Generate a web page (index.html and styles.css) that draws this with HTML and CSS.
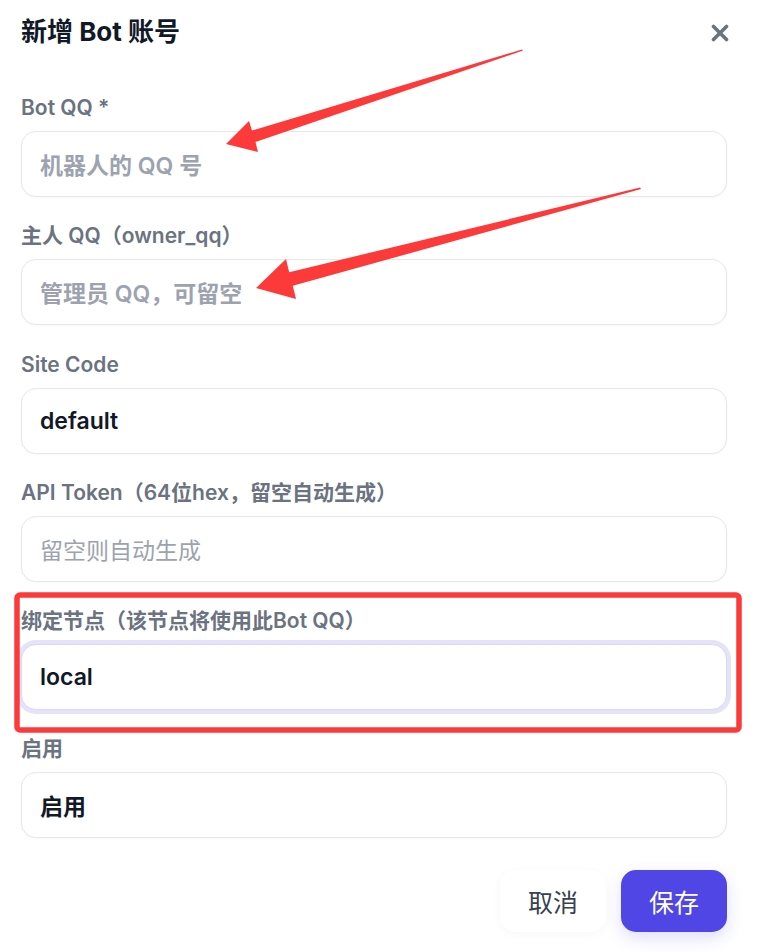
FILE: index.html
```html
<!DOCTYPE html>
<html lang="zh-CN">
<head>
<meta charset="utf-8">
<title>新增 Bot 账号</title>
<link rel="stylesheet" href="styles.css">
</head>
<body>
<div class="dialog">
  <header class="head">
    <h2 class="title">新增 Bot 账号</h2>
    <button class="close" aria-label="关闭">
      <svg width="18" height="18" viewBox="0 0 18 18"><path d="M2.5 2.5 L15.5 15.5 M15.5 2.5 L2.5 15.5" stroke="#6b7280" stroke-width="3.6" stroke-linecap="round"/></svg>
    </button>
  </header>

  <div class="field">
    <label class="label">Bot QQ *</label>
    <div class="input placeholder bold">机器人的 QQ 号</div>
  </div>
  <div class="field field-gap">
    <label class="label">主人 QQ（owner_qq）</label>
    <div class="input placeholder bold">管理员 QQ，可留空</div>
  </div>
  <div class="field">
    <label class="label">Site Code</label>
    <div class="input value">default</div>
  </div>
  <div class="field">
    <label class="label">API Token（64位hex，留空自动生成）</label>
    <div class="input placeholder">留空则自动生成</div>
  </div>
  <div class="field">
    <label class="label">绑定节点（该节点将使用此Bot QQ）</label>
    <div class="input value focused">local</div>
  </div>
  <div class="field">
    <label class="label">启用</label>
    <div class="input value">启用</div>
  </div>

  <footer class="actions">
    <button class="btn cancel">取消</button>
    <button class="btn save">保存</button>
  </footer>
</div>

<svg class="annot" width="769" height="952" viewBox="0 0 769 952">
  <polygon fill="#fc3a3a" points="522,49.5 523,50.5 255.5,142 258,152 226,144 249,121 252,130.5"/>
  <polygon fill="#fc3a3a" points="640,187.5 641,189 292.8,285.8 296,299 256,288 286,259 289.2,272.2"/>
  <rect x="17" y="595" width="722" height="135" rx="3" fill="none" stroke="#fc3a3a" stroke-width="5.5"/>
</svg>
</body>
</html>
```

FILE: styles.css
```css
* { box-sizing: border-box; }
html, body { margin: 0; padding: 0; background: #ffffff; }
body {
  font-family: Inter, "Noto Sans CJK SC", sans-serif;
  color: #111827;
  width: 769px;
  height: 952px;
  overflow: hidden;
  position: relative;
}
.dialog {
  width: 706px;
  margin-left: 21px;
  padding-top: 14px;
}
.head {
  display: flex;
  justify-content: space-between;
  align-items: center;
  height: 36px;
  margin-bottom: 46px;
}
.title {
  margin: 0;
  font-size: 26px;
  font-weight: 700;
  line-height: 36px;
  color: #111827;
}
.close {
  border: none;
  background: none;
  padding: 0;
  width: 18px;
  height: 18px;
  margin-right: -2px;
  margin-top: 2px;
  display: flex;
  cursor: pointer;
}
.field {
  display: flex;
  flex-direction: column;
  margin-bottom: 27px;
}
.field-gap { margin-bottom: 28px; }
.label {
  font-size: 21px;
  line-height: 24px;
  font-weight: 600;
  color: #6b7280;
  margin-bottom: 11px;
}
.input {
  height: 66px;
  border: 1px solid #e5e7eb;
  border-radius: 15px;
  padding: 0 18px;
  display: flex;
  align-items: center;
  font-size: 23px;
  background: #fff;
  box-shadow: 0 1px 2px rgba(0,0,0,0.03);
}
.placeholder { color: #9ca3af; font-weight: 400; }
.placeholder.bold { font-weight: 600; }
.value { color: #111827; font-weight: 600; }
.focused {
  border-color: #d9d7f5;
  box-shadow: 0 0 0 4px #e5e3fa;
}
.actions {
  display: flex;
  justify-content: flex-end;
  gap: 15px;
  margin-top: 32px;
}
.btn {
  width: 106px;
  height: 62px;
  border: none;
  border-radius: 15px;
  font-family: Inter, "Noto Sans CJK SC", sans-serif;
  font-size: 25px;
  font-weight: 400;
  cursor: pointer;
}
.cancel {
  background: #fff;
  color: #374151;
  box-shadow: 0 2px 10px rgba(0,0,0,0.04);
}
.save {
  background: #4f46e5;
  color: #fff;
  box-shadow: 0 6px 16px rgba(79,70,229,0.18);
}
.annot {
  position: absolute;
  left: 0;
  top: 0;
  pointer-events: none;
}
```
